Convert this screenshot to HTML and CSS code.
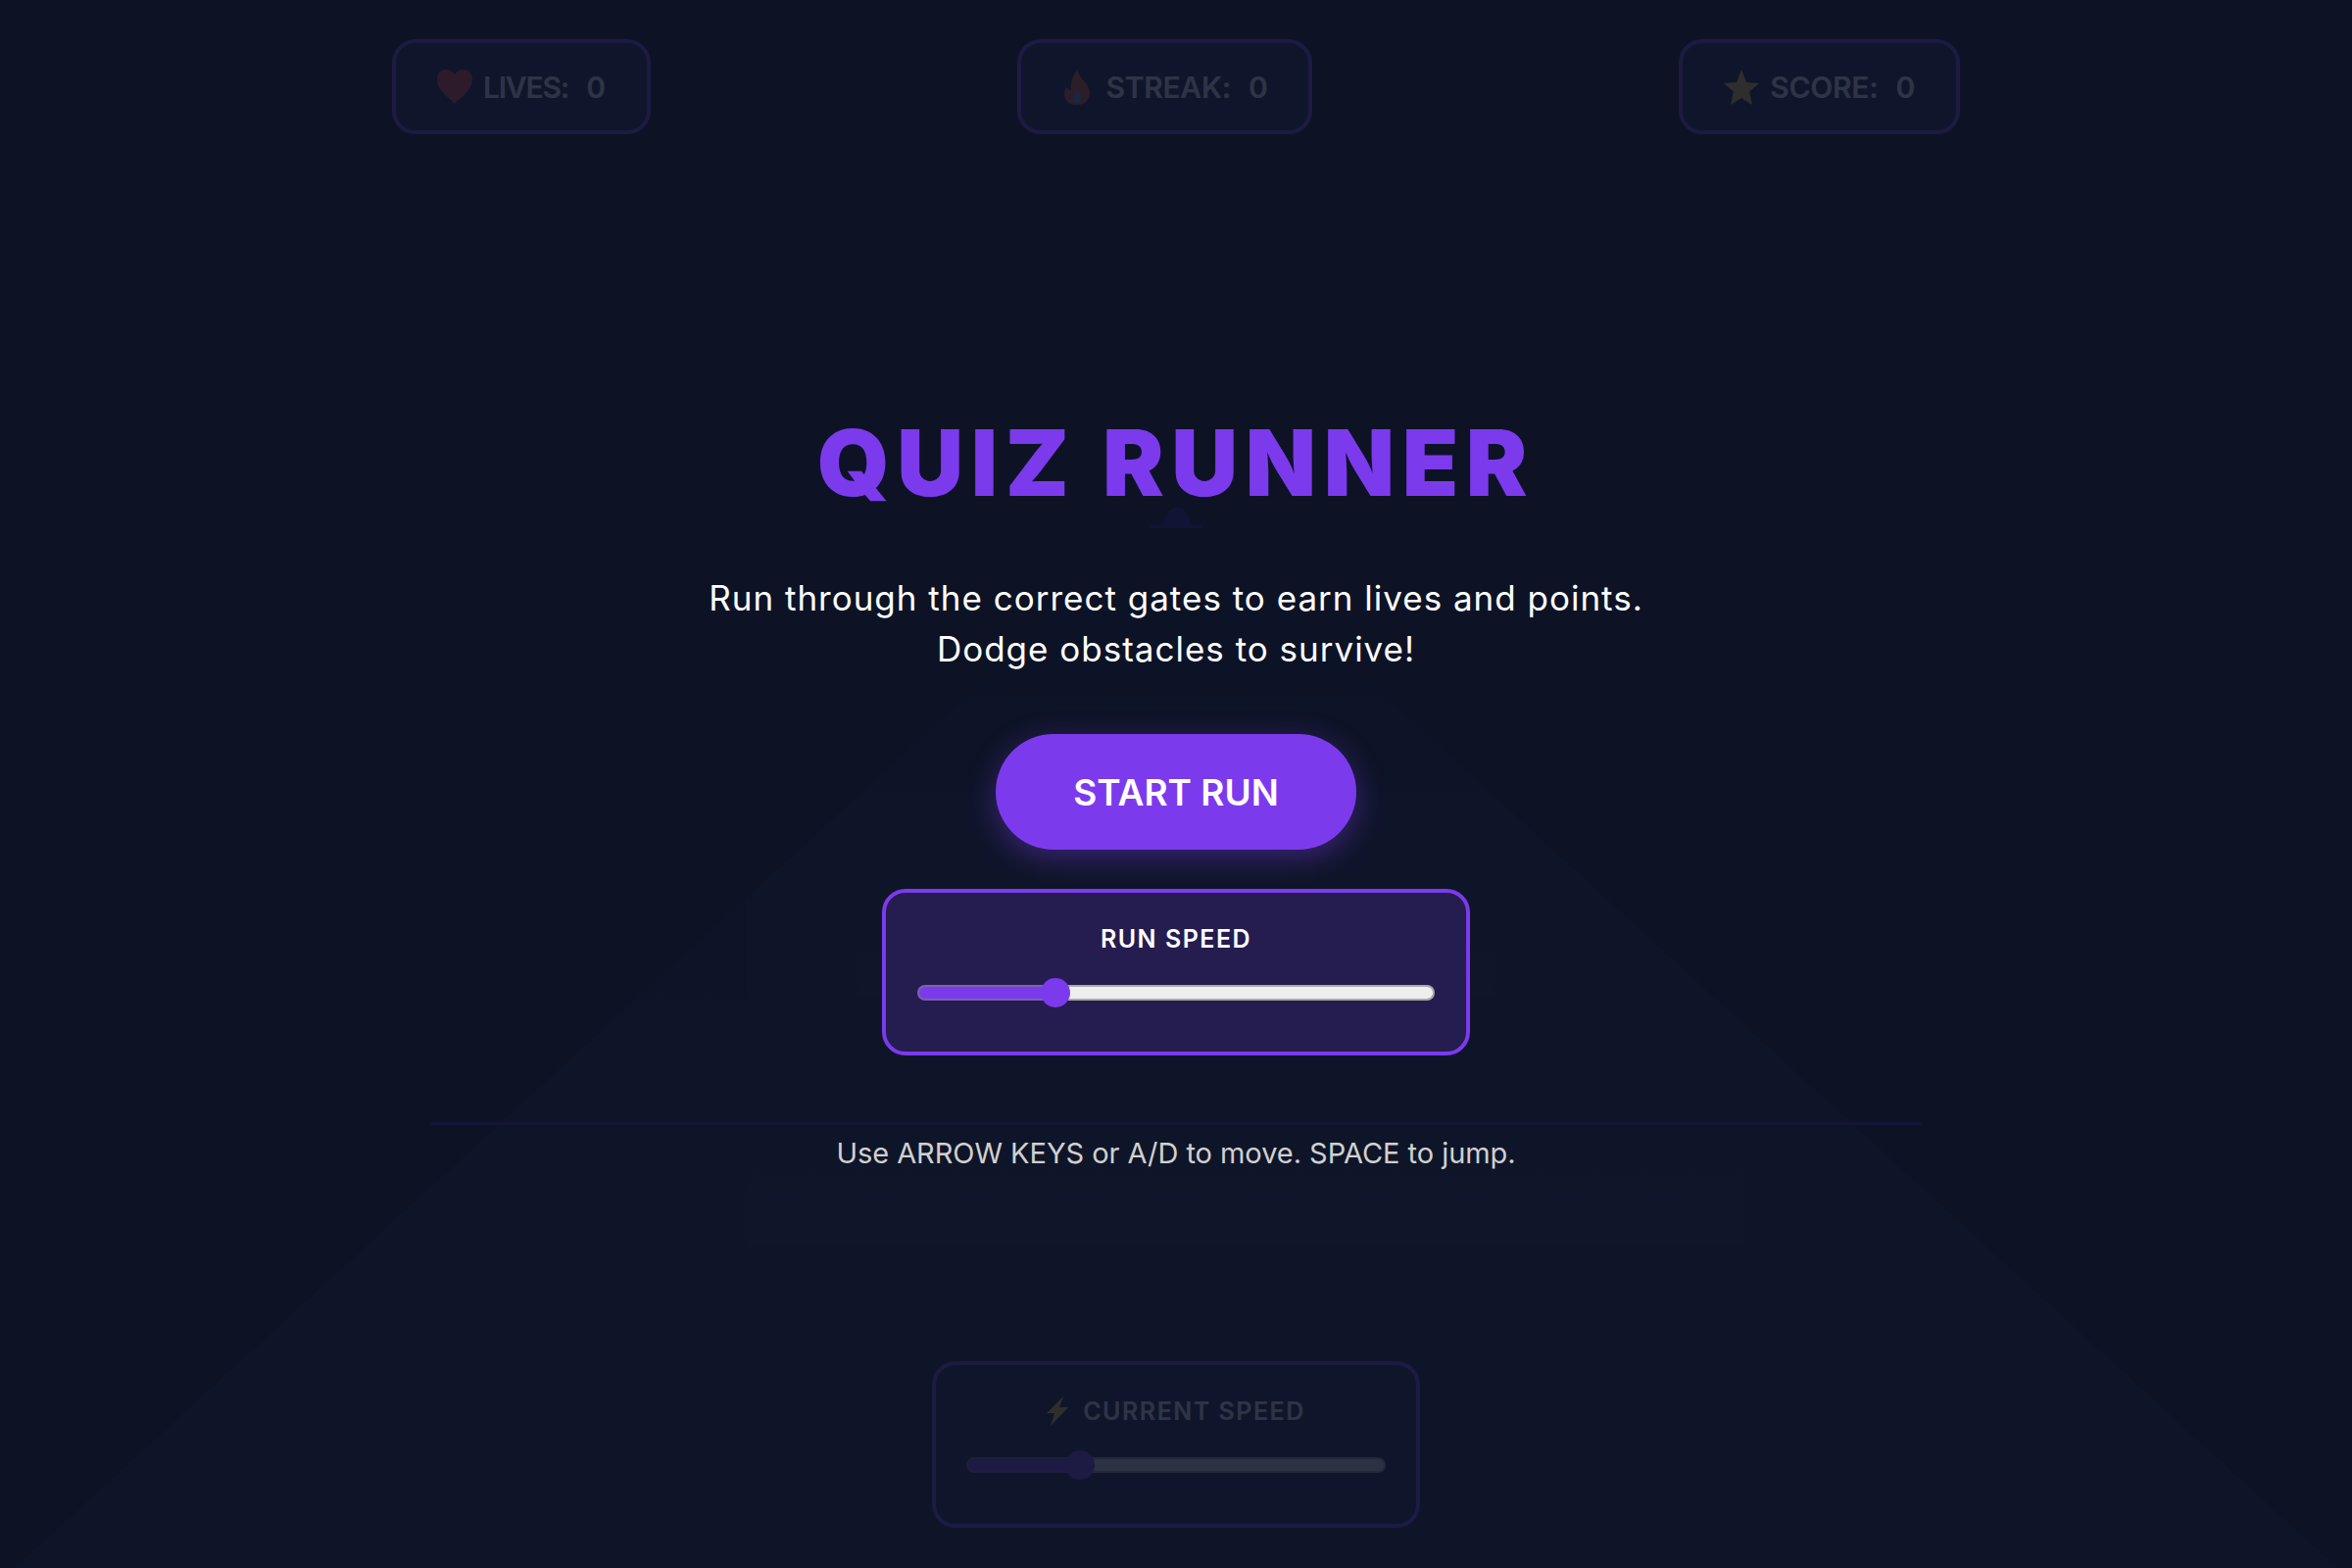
FILE: index.html
```html
<!DOCTYPE html>
<html lang="en">
<head>
    <meta charset="UTF-8">
    <meta name="viewport" content="width=device-width, initial-scale=1.0">
    <title>Quiz Runner</title>
    <link rel="stylesheet" href="styles.css">
</head>
<body>
    <div class="game">
        <!-- road and far gates, seen through the start overlay -->
        <svg class="road" viewBox="0 0 2400 1600" preserveAspectRatio="none">
            <defs>
                <clipPath id="roadClip"><polygon points="1200,515 2385,1600 15,1600"/></clipPath>
                <linearGradient id="roadFade" gradientUnits="userSpaceOnUse" x1="0" y1="515" x2="0" y2="1300">
                    <stop offset="0" stop-color="#000"/>
                    <stop offset="0.4" stop-color="#0c0c18"/>
                    <stop offset="1" stop-color="#141424"/>
                </linearGradient>
            </defs>
            <polygon points="1200,515 2385,1600 15,1600" fill="url(#roadFade)"/>
            <g clip-path="url(#roadClip)">
                <rect x="761" y="800" width="1019" height="471" fill="#fff" fill-opacity="0.02"/>
                <rect x="874" y="818" width="652" height="198" fill="#fff" fill-opacity="0.02"/>
            </g>
            <path d="M1187 535 Q1191 518 1201 518 Q1211 518 1215 535 Z" fill="#24127a"/>
            <rect x="1173" y="535" width="54" height="4" fill="#24127a"/>
            <rect x="439" y="1145" width="1522" height="3" fill="#2e1782"/>
        </svg>

        <div class="hud">
            <div class="stat">
                <svg class="stat-icon" viewBox="0 0 36 36">
                    <path d="M18 35 C12 28 0 21 0 10 C0 3 5 0 9.500 0 C13 0 16.500 2 18 6 C19.500 2 23 0 26.500 0 C31 0 36 3 36 10 C36 21 24 28 18 35 Z" fill="#f44336"/>
                </svg>
                <span class="stat-label stat-label-tight">LIVES:</span>
                <span class="stat-value">0</span>
            </div>
            <div class="stat">
                <svg class="stat-icon stat-icon-flame" viewBox="0 0 30 36">
                    <path d="M15 0 C17 8 22 10 26 17 C30 24 28 36 15 36 C2 36 0 25 4 18 C6 20 7 21 9 21 C8 13 11 6 15 0 Z" fill="#f4511e"/>
                    <path d="M15 20 C16 24 20 26 19.500 30 C19 33 17 34 15 34 C12 34 10.500 32 10.500 29.500 C10.500 26 14 24 15 20 Z" fill="#5a9fd0"/>
                </svg>
                <span class="stat-label">STREAK:</span>
                <span class="stat-value">0</span>
            </div>
            <div class="stat">
                <svg class="stat-icon" viewBox="0 0 36 36">
                    <path d="M18 0 L23 13 L36 14 L26 22.500 L29 36 L18 29 L7 36 L10 22.500 L0 14 L13 13 Z" fill="#fdd835"/>
                </svg>
                <span class="stat-label">SCORE:</span>
                <span class="stat-value">0</span>
            </div>
        </div>

        <div class="speed-panel speed-panel-game">
            <div class="speed-label">
                <svg class="bolt" viewBox="0 0 22 30">
                    <path d="M17 0 L0 17 L8 17 L4 30 L22 11 L13 11 Z" fill="#fdd835"/>
                </svg>
                <span>CURRENT SPEED</span>
            </div>
            <input class="speed-slider" type="range" min="0" max="100" value="25">
        </div>
    </div>

    <div class="overlay">
        <h1 class="title">QUIZ RUNNER</h1>
        <p class="subtitle">Run through the correct gates to earn lives and points.<br>Dodge obstacles to survive!</p>
        <button class="start-btn">START RUN</button>
        <div class="speed-panel speed-panel-start">
            <div class="speed-label">RUN SPEED</div>
            <input class="speed-slider" type="range" min="0" max="100" value="25">
        </div>
        <p class="hint">Use ARROW KEYS or A/D to move. SPACE to jump.</p>
    </div>
</body>
</html>
```

FILE: styles.css
```css
* {
    box-sizing: border-box;
}
html, body {
    height: 100%;
}
body {
    margin: 0;
    overflow: hidden;
    background: #000;
    color: #fff;
    font-family: Inter, "Noto Sans", sans-serif;
}
.game {
    position: relative;
    height: 100vh;
    padding: 40px 0 41px;
    display: flex;
    flex-direction: column;
    justify-content: space-between;
    align-items: center;
}
.road {
    position: absolute;
    top: 0;
    left: 0;
    width: 100%;
    height: 100%;
}
.hud {
    position: relative;
    width: 1600px;
    display: flex;
    justify-content: space-between;
}
.stat {
    height: 97px;
    padding: 0 42px;
    display: flex;
    align-items: center;
    background: rgba(30, 41, 80, 0.6);
    border: 4px solid #7c3aed;
    border-radius: 24px;
    font-size: 30px;
    font-weight: 600;
    letter-spacing: -0.3px;
}
.stat-icon {
    height: 36px;
    width: auto;
    margin-right: 11px;
}
.stat-icon-flame {
    margin-right: 15px;
}
.stat-label-tight {
    letter-spacing: -1.2px;
}
.stat-value {
    margin-left: 18px;
}
.speed-panel {
    position: relative;
    height: 170px;
    padding: 27px 32px 0;
    background: rgba(124, 58, 237, 0.2);
    border: 4px solid #7c3aed;
    border-radius: 24px;
    text-align: center;
}
.speed-panel-game {
    width: 498px;
    padding-left: 31px;
    padding-right: 31px;
    background: rgba(30, 41, 80, 0.3);
}
.speed-panel-start {
    width: 600px;
    margin-top: 40px;
}
.speed-label {
    height: 39px;
    display: flex;
    align-items: center;
    justify-content: center;
    font-size: 25px;
    font-weight: 600;
    letter-spacing: 1.500px;
}
.bolt {
    width: 22px;
    height: 30px;
    margin-right: 15px;
}
.speed-slider {
    -webkit-appearance: none;
    appearance: none;
    display: block;
    width: 100%;
    height: 30px;
    margin: 21px 0 0;
    background: transparent;
}
.speed-slider::-webkit-slider-runnable-track {
    height: 16px;
    border: 2px solid transparent;
    border-radius: 8px;
    background:
        linear-gradient(to right, #7c3aed 26.500%, #eeeeee 26.500%) padding-box,
        linear-gradient(to right, #7d62ad 26.500%, #aaaaaa 26.500%) border-box;
}
.speed-slider::-webkit-slider-thumb {
    -webkit-appearance: none;
    width: 30px;
    height: 30px;
    margin-top: -9px;
    border-radius: 50%;
    background: #7c3aed;
}
.overlay {
    position: absolute;
    top: 0;
    left: 0;
    width: 100%;
    height: 100%;
    display: flex;
    flex-direction: column;
    align-items: center;
    justify-content: center;
    background: rgba(15, 22, 42, 0.87);
    text-align: center;
}
.title {
    margin: 0 0 40px;
    font-size: 94px;
    font-weight: 900;
    line-height: 144px;
    letter-spacing: 7.600px;
    color: #7c3aed;
}
.subtitle {
    margin: 0 0 61px;
    font-size: 35px;
    font-weight: 400;
    line-height: 52px;
    letter-spacing: 1px;
}
.start-btn {
    width: 368px;
    height: 118px;
    padding: 0;
    background: #7c3aed;
    color: #fff;
    border: none;
    border-radius: 59px;
    font-family: inherit;
    font-size: 37px;
    font-weight: 600;
    box-shadow: 0 8px 30px rgba(124, 58, 237, 0.4);
}
.hint {
    margin: 78px 0 1px;
    font-size: 29px;
    font-weight: 400;
    line-height: 44px;
    letter-spacing: -0.050px;
    color: #d0d0d0;
}
```
